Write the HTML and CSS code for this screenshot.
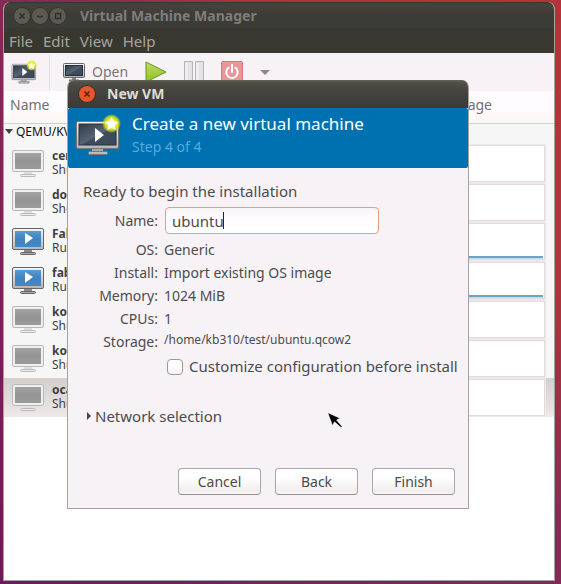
FILE: index.html
```html
<!DOCTYPE html>
<html lang="en">
<head>
<meta charset="utf-8">
<meta name="viewport" content="width=device-width, initial-scale=1">
<title>Virtual Machine Manager</title>
<link rel="stylesheet" href="styles.css">
</head>
<body>
<svg class="defs" aria-hidden="true">
  <defs>
    <linearGradient id="frame" x1="0" y1="0" x2="0" y2="1"><stop offset="0" stop-color="#f4f4f4"/><stop offset="1" stop-color="#b5b5b5"/></linearGradient>
    <linearGradient id="dark" x1="0" y1="0" x2="1" y2="1"><stop offset="0" stop-color="#2f3b4b"/><stop offset=".5" stop-color="#566473"/><stop offset=".55" stop-color="#404d5d"/><stop offset="1" stop-color="#3c4858"/></linearGradient>
    <linearGradient id="blue" x1="0" y1="0" x2="0" y2="1"><stop offset="0" stop-color="#5b9bce"/><stop offset=".5" stop-color="#3d83c0"/><stop offset="1" stop-color="#4389c5"/></linearGradient>
    <linearGradient id="gray" x1="0" y1="0" x2="0" y2="1"><stop offset="0" stop-color="#a3a3a3"/><stop offset=".5" stop-color="#939393"/><stop offset="1" stop-color="#9b9b9b"/></linearGradient>
    <linearGradient id="green" x1="0" y1="0" x2="0" y2="1"><stop offset="0" stop-color="#c3dc62"/><stop offset="1" stop-color="#94bd26"/></linearGradient>
    <radialGradient id="glow"><stop offset=".45" stop-color="#f3f22a"/><stop offset=".75" stop-color="#dde610" stop-opacity=".8"/><stop offset="1" stop-color="#dde610" stop-opacity="0"/></radialGradient>
    <symbol id="off" viewBox="0 0 32 28"><rect x=".5" y=".5" width="31" height="21" rx="1.5" fill="#efefef" stroke="#b9b9b9"/><rect x="3" y="3" width="26" height="16" fill="url(#gray)"/><path d="M12 22h8v3h-8z" fill="#dedede"/><rect x="8.5" y="24.500" width="15" height="2" rx="1" fill="#eee" stroke="#b9b9b9"/></symbol>
    <symbol id="on" viewBox="0 0 32 28"><rect x=".5" y=".5" width="31" height="21" rx="1.500" fill="url(#frame)" stroke="#666"/><rect x="3" y="3" width="26" height="16" fill="url(#blue)"/><path d="M13 5l8 5-8 6z" fill="#fff"/><path d="M12 22h8v3h-8z" fill="#8c8c8c"/><rect x="8.500" y="24.500" width="15" height="2" rx="1" fill="#aaa" stroke="#666"/></symbol>
    <symbol id="newvm" viewBox="0 0 46 42"><rect x="1.500" y="7.500" width="42" height="27" rx="1.500" fill="url(#frame)" stroke="#777"/><rect x="4" y="10" width="37" height="21" fill="url(#dark)" stroke="#26313f"/><path d="M20 14l9 7-9 7z" fill="#fff"/><path d="M17 35h11v3H17z" fill="#aaa"/><rect x="13.500" y="37.500" width="19" height="3" rx="1" fill="#bbb" stroke="#777"/><circle cx="36.500" cy="9.500" r="9.500" fill="url(#glow)"/><path d="M36.500 3l2 4.300 4.700.6-3.400 3.300.9 4.800-4.200-2.300-4.200 2.300.9-4.800-3.400-3.300 4.700-.6z" fill="#fff"/></symbol>
  </defs>
</svg>
<div class="desktop">
  <main class="window">
    <header class="titlebar">
      <button class="wm" aria-label="Close"><svg viewBox="0 0 16 16"><path d="M5.500 5.500l5 5m0-5l-5 5"/></svg></button>
      <button class="wm" aria-label="Minimize"><svg viewBox="0 0 16 16"><path d="M5 8.500h6"/></svg></button>
      <button class="wm" aria-label="Maximize"><svg viewBox="0 0 16 16"><path d="M5.500 5.500h5v5h-5z"/></svg></button>
      <h1 class="title">Virtual Machine Manager</h1>
    </header>
    <nav class="menubar"><button>File</button><button>Edit</button><button>View</button><button>Help</button></nav>
    <div class="toolbar">
      <button class="tool new" aria-label="New virtual machine"><svg width="26" height="24" viewBox="0 0 46 42" preserveAspectRatio="none"><use href="#newvm"/></svg></button>
      <span class="separator"></span>
      <button class="tool open"><svg width="22" height="19" viewBox="0 0 22 19"><rect x=".5" y=".5" width="21" height="14" rx="1" fill="url(#frame)" stroke="#666"/><rect x="2.500" y="2.500" width="17" height="10" fill="url(#dark)" stroke="#26313f"/><path d="M9 15h4v2H9z" fill="#888"/><path d="M6 17.500h10" stroke="#666" stroke-width="2"/></svg>Open</button>
      <button class="tool" aria-label="Run"><svg width="22" height="22" viewBox="0 0 22 22"><path d="M1 1l20 10L1 21z" fill="url(#green)" stroke="#5a9a1c"/></svg></button>
      <button class="tool" aria-label="Pause"><svg width="20" height="22" viewBox="0 0 20 22"><path d="M.5.5h8v21h-8zM11.500.5h8v21h-8z" fill="#e4e2e4" stroke="#b7b5b7"/><path d="M2.500 2v18M13.500 2v18" stroke="#f4f2f4" stroke-width="2"/></svg></button>
      <button class="tool" aria-label="Shut down"><svg width="22" height="22" viewBox="0 0 22 22"><rect x=".5" y=".5" width="21" height="21" rx="1.500" fill="#e99699" stroke="#d9777b"/><path d="M7.500 6.700a5.700 5.700 0 1 0 7 0M11 4v7" fill="none" stroke="#fff" stroke-width="2" stroke-linecap="round"/></svg></button>
      <button class="tool" aria-label="Shut down options"><svg width="10" height="5" viewBox="0 0 10 5"><path d="M0 0h10L5 5z" fill="#8c8888"/></svg></button>
    </div>
    <table class="machines">
      <thead><tr><th>Name</th><th class="usage-head">CPU usage</th></tr></thead>
      <tbody>
        <tr class="group"><td colspan="2"><svg width="8" height="5" viewBox="0 0 8 5"><path d="M0 0h8L4 5z" fill="#444"/></svg>QEMU/KVM</td></tr>
        <tr><td><div class="vm"><svg class="screen"><use href="#off"/></svg><p><b>centos</b><br>Shutoff</p></div></td><td class="usage"><div class="chart"></div></td></tr>
        <tr><td><div class="vm"><svg class="screen"><use href="#off"/></svg><p><b>docker</b><br>Shutoff</p></div></td><td class="usage"><div class="chart"></div></td></tr>
        <tr><td><div class="vm"><svg class="screen"><use href="#on"/></svg><p><b>Fabric</b><br>Running</p></div></td><td class="usage"><div class="chart active"></div></td></tr>
        <tr><td><div class="vm"><svg class="screen"><use href="#on"/></svg><p><b>fabric</b><br>Running</p></div></td><td class="usage"><div class="chart active"></div></td></tr>
        <tr><td><div class="vm"><svg class="screen"><use href="#off"/></svg><p><b>kolla</b><br>Shutoff</p></div></td><td class="usage"><div class="chart"></div></td></tr>
        <tr><td><div class="vm"><svg class="screen"><use href="#off"/></svg><p><b>kolla2</b><br>Shutoff</p></div></td><td class="usage"><div class="chart"></div></td></tr>
        <tr class="selected"><td><div class="vm"><svg class="screen"><use href="#off"/></svg><p><b>ocata</b><br>Shutoff</p></div></td><td class="usage"><div class="chart"></div></td></tr>
      </tbody>
    </table>
  </main>
  <div class="overlay">
    <section class="dialog" role="dialog" aria-labelledby="dialog-title">
      <header class="dialog-bar">
        <button class="wm close" aria-label="Close dialog"><svg viewBox="0 0 16 16"><path d="M5.500 5.500l5 5m0-5l-5 5"/></svg></button>
        <h2 class="title" id="dialog-title">New VM</h2>
      </header>
      <div class="banner">
        <svg width="46" height="42"><use href="#newvm"/></svg>
        <div><h3>Create a new virtual machine</h3><p>Step 4 of 4</p></div>
      </div>
      <form class="form">
        <p class="intro">Ready to begin the installation</p>
        <div class="fields">
          <label for="name">Name:</label>
          <div class="entry"><input id="name" type="text" value="ubuntu"><span class="caret"></span></div>
          <span class="key">OS:</span><span>Generic</span>
          <span class="key">Install:</span><span>Import existing OS image</span>
          <span class="key">Memory:</span><span>1024 MiB</span>
          <span class="key">CPUs:</span><span>1</span>
          <span class="key">Storage:</span><span class="path">/home/kb310/test/ubuntu.qcow2</span>
          <label class="check" for="customize"><input id="customize" type="checkbox">Customize configuration before install</label>
        </div>
        <button type="button" class="expander"><svg width="4" height="8" viewBox="0 0 4 8"><path d="M0 0l4 4-4 4z" fill="#444"/></svg>Network selection</button>
        <div class="actions"><button type="button">Cancel</button><button type="button">Back</button><button type="button">Finish</button></div>
      </form>
    </section>
  </div>
  <svg class="pointer" width="16" height="17" viewBox="0 0 16 17" aria-hidden="true"><path d="M.8.8L13 6.200 9.500 8l5.500 6.500-1 1L7.500 9.800 5.500 13.500z" fill="#000" stroke="#fff" stroke-width=".5"/></svg>
</div>
</body>
</html>
```

FILE: styles.css
```css
* { box-sizing: border-box; }
body, h1, h2, h3, p { margin: 0; font-weight: normal; }
body { font: 14px/20px "Noto Sans", sans-serif; color: #4c4c4c; }
button { font: inherit; color: inherit; background: none; border: 0; padding: 0; margin: 0; }
svg { display: block; flex: none; }
.defs { position: absolute; width: 0; height: 0; }

.desktop {
  position: relative;
  display: flex;
  min-height: 100vh;
  padding: 2px 6px 3px 3px;
  background: linear-gradient(to top right, #6d1a5c 0%, #872a55 55%, #ad353a 75%, #b33438 100%);
}
.window {
  flex: 1;
  display: flex;
  flex-direction: column;
  min-width: 0;
  background: #fff;
  border: 1px solid #a5a29e;
  border-top: 0;
  border-radius: 7px 7px 0 0;
  overflow: hidden;
}
.titlebar {
  display: flex;
  align-items: center;
  gap: 2px;
  height: 26px;
  padding: 2px 10px 0;
  color: #807d78;
  background: linear-gradient(#34332c, #45433d 2px, #443d39 9px, #3b3c38 12px, #3b3c38);
}
.title { font-size: 14px; font-weight: bold; margin-left: 12px; }
.wm { width: 16px; height: 16px; border-radius: 50%; background: #5c5b53; box-shadow: 0 0 0 1px #34332e; }
.wm path { fill: none; stroke: #302f2a; stroke-width: 1.5; }
.menubar { display: flex; gap: 10px; height: 25px; padding: 1px 5px 0; align-items: center; font-size: 15px; color: #a8a59b; background: #393830; }
.toolbar { display: flex; align-items: center; gap: 17px; height: 38px; padding: 0 7px; background: #f6f2f6; }
.tool { display: flex; align-items: center; gap: 7px; color: #777; }
.new { margin-right: -5px; }
.separator { width: 1px; height: 35px; background: #e3dcdc; margin-right: -4px; }

.machines { width: 100%; border-collapse: collapse; table-layout: fixed; background: #f6f6f6; }
.machines th {
  height: 32px;
  padding: 0 6px 3px;
  font-weight: normal;
  text-align: left;
  color: #707070;
  background: linear-gradient(#fffcff 60%, #fff8f5 75%, #f8f8f8 95%);
  border-bottom: 1px solid #d2d0d0;
}
.machines .usage-head { text-align: right; padding-right: 62px; }
.machines td { height: 39px; padding: 0; }
.machines .group td { height: 21px; line-height: 14px; padding: 0 1px 4px; font-size: 12px; color: #111; }
.group svg { display: inline-block; margin-right: 3px; vertical-align: 2px; }
.vm { display: flex; gap: 8px; align-items: center; padding-left: 8px; }
.screen { width: 32px; height: 28px; }
.vm p { font-size: 12px; line-height: 14px; color: #3f3f3f; padding-bottom: 1px; }
.machines .usage { padding: 1px 9px 1px 0; background-clip: padding-box; }
.chart { height: 37px; border: 1px solid #e3dadd; background: #fff; outline: 1px solid #efe8ea; padding: 32px 1px 0 0; }
.active::after { content: ""; display: block; height: 3px; background: linear-gradient(#6ba3c4 2px, #c5ddec 2px); }
.selected { background: linear-gradient(#d2cfcd, #eee8e8); }

.overlay { position: absolute; inset: 80px 92px auto 67px; }
.dialog { background: #f6f2f6; border: 1px solid #a5a29e; border-top: 0; border-radius: 7px 7px 0 0; overflow: hidden; }
.dialog-bar { display: flex; align-items: center; height: 28px; padding: 0 11px; color: #dfdbd2; background: linear-gradient(#64645a, #4d4d43 3px, #434240 14px, #3c3b36); }
.close { background: #e9552b; }
.close path { stroke: #5c220f; }
.banner { display: flex; gap: 11px; align-items: center; min-height: 60px; padding: 0 7px 6px; background: #0071b0; border-radius: 2px; color: #fff; }
.banner h3 { font-size: 17px; line-height: 24px; }
.banner p { line-height: 22px; color: #55abe0; }
.form { padding: 13px 13px 13px 15px; }
.intro { margin-bottom: 6px; font-size: 15px; }
.fields { display: grid; grid-template-columns: 75px 1fr; column-gap: 6px; line-height: 23px; }
.fields label, .key { text-align: right; }
.fields > label:first-child { line-height: 27px; margin-bottom: 4px; }
.entry { position: relative; width: 73%; height: 27px; margin-left: 1px; }
.entry input {
  display: block;
  width: 100%;
  height: 100%;
  padding: 0 6px;
  font: inherit;
  font-size: 15px;
  color: #4c4c4c;
  border: 1px solid #ee9b7c;
  border-radius: 4px;
  background: linear-gradient(#f5f4f3, #fdfaff 7px, #fff);
}
.caret { position: absolute; left: 58px; top: 5px; width: 1px; height: 17px; background: #222; }
.path { font-size: 12px; line-height: 20px; }
.fields .check { grid-column: 2; display: flex; align-items: center; gap: 6px; font-size: 15px; line-height: 27px; text-align: left; white-space: nowrap; }
.check input { appearance: none; flex: none; width: 16px; height: 16px; margin: 0 0 0 3px; border: 1px solid #999; border-radius: 4px; background: linear-gradient(#fff, #f8f5f8); }
.expander { display: flex; align-items: center; gap: 4px; margin: 26px 0 42px 4px; font-size: 15px; }
.actions { display: flex; justify-content: flex-end; gap: 14px; }
.actions button { width: 83px; height: 27px; border: 1px solid #aaa7a9; border-bottom-color: #949194; border-radius: 4px; background: linear-gradient(#fff 35%, #f3eeee 85%, #f8f5f8); }
.pointer { position: absolute; left: 327px; top: 412px; }
```
